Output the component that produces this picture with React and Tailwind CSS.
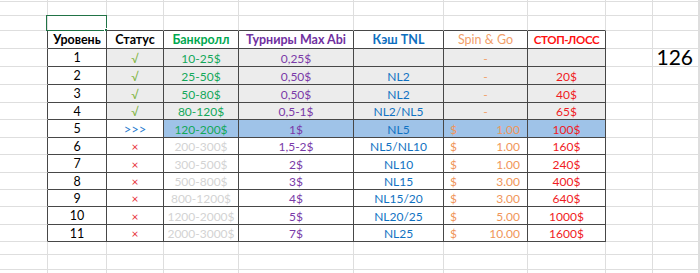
import React from "react";

const FONT = "font-['Lato','Noto_Sans',sans-serif]";

const DATA = [
  [1, "√", "10-25$", "0,25$", "", "-", ""],
  [2, "√", "25-50$", "0,50$", "NL2", "-", "20$"],
  [3, "√", "50-80$", "0,50$", "NL2", "-", "40$"],
  [4, "√", "80-120$", "0,5-1$", "NL2/NL5", "-", "65$"],
  [5, ">>>", "120-200$", "1$", "NL5", "1.00", "100$"],
  [6, "×", "200-300$", "1,5-2$", "NL5/NL10", "1.00", "160$"],
  [7, "×", "300-500$", "2$", "NL10", "1.00", "240$"],
  [8, "×", "500-800$", "3$", "NL15", "3.00", "400$"],
  [9, "×", "800-1200$", "4$", "NL15/20", "3.00", "640$"],
  [10, "×", "1200-2000$", "5$", "NL20/25", "5.00", "1000$"],
  [11, "×", "2000-3000$", "7$", "NL25", "10.00", "1600$"],
];

const HEADERS = [
  ["Уровень", "font-bold text-black text-[12.5px]"],
  ["Статус", "font-bold text-black text-[12.5px]"],
  ["Банкролл", "font-bold text-[#00a84f] text-[12.5px]"],
  ["Турниры Max Abi", "font-bold text-[#7030a0] text-[12.5px]"],
  ["Кэш TNL", "font-bold text-[#0f6fc0] text-[12.5px]"],
  ["Spin & Go", "font-normal text-[#f2a06a] text-[12.5px]"],
  ["СТОП-ЛОСС", "font-bold text-[#ff1010] text-[11.5px] tracking-[-0.4px]"],
];

const NROWS = 18;
const NCOLS = 11;

const inTable = (r, c) => r >= 3 && r <= 14 && c >= 1 && c <= 7;

function CellContent({ r, c }) {
  if (r === 4 && c === 9) {
    return (
      <div className="flex h-full w-full items-end justify-end pr-[5px] text-[21px] leading-none text-black">
        <span className="translate-y-[1px]">126</span>
      </div>
    );
  }
  if (!inTable(r, c)) return null;
  if (r === 3) {
    const [t, cls] = HEADERS[c - 1];
    return (
      <div className={`flex h-full w-full items-center justify-center whitespace-nowrap pt-[1px] ${cls}`}>
        {t}
      </div>
    );
  }
  const i = r - 4;
  const row = DATA[i];
  const v = row[c - 1];
  const base = "flex h-full w-full items-center justify-center whitespace-nowrap pt-[2px]";
  if (c === 1) {
    return <div className={`${base} text-[12.5px] text-black`}>{v}</div>;
  }
  if (c === 2) {
    const cls =
      v === "√"
        ? "text-[#7fb541] text-[12px]"
        : v === ">>>"
        ? "text-[#2f7fd0] text-[13px]"
        : "text-[#e8323a] text-[12px]";
    return <div className={`${base} ${cls}`}>{v}</div>;
  }
  if (c === 3) {
    const cls = i <= 4 ? "text-[#13a85a]" : "text-[#d3d3d3]";
    return <div className={`${base} text-[12px] ${cls}`}>{v}</div>;
  }
  if (c === 4) {
    return <div className={`${base} text-[12px] text-[#7a3aa8]`}>{v}</div>;
  }
  if (c === 5) {
    return <div className={`${base} text-[12px] text-[#1172c2]`}>{v}</div>;
  }
  if (c === 6) {
    if (v === "-") {
      return <div className={`${base} text-[12px] text-[#f2a06a]`}>-</div>;
    }
    return (
      <div className="flex h-full w-full items-center justify-between pl-[6px] pr-[7px] pt-[2px] text-[12px] text-[#f0965a]">
        <span>$</span>
        <span>{v}</span>
      </div>
    );
  }
  if (c === 7) {
    return <div className={`${base} text-[12px] text-[#f01c24]`}>{v}</div>;
  }
  return null;
}

function bgFor(r, c) {
  if (r >= 4 && r <= 7 && c >= 2 && c <= 7) return "bg-[#ececec]";
  if (r === 8 && c >= 3 && c <= 7) return "bg-[#9fc3e8]";
  return "bg-white";
}

export default function App() {
  const cells = [];
  for (let r = 0; r < NROWS; r++) {
    for (let c = 0; c < NCOLS; c++) {
      const darkR = inTable(r, c) || inTable(r, c + 1);
      const darkB = inTable(r, c) || inTable(r + 1, c);
      const rCls = darkR ? "border-r-[#474747]" : "border-r-[#dedede]";
      const bCls = darkB ? "border-b-[#474747]" : "border-b-[#dedede]";
      const selected = r === 2 && c === 1;
      cells.push(
        <div
          key={`${r}-${c}`}
          className={`relative overflow-visible border-r border-b ${rCls} ${bCls} ${bgFor(r, c)}`}
        >
          <CellContent r={r} c={c} />
          {selected && (
            <div className="pointer-events-none absolute left-[-2px] top-[-1px] right-[-1px] bottom-[-1px] border border-[#217346]">
              <div className="absolute right-[-3px] bottom-[-3px] h-[5px] w-[5px] border border-white bg-[#217346]" />
            </div>
          )}
        </div>
      );
    }
  }
  return (
    <div className={`h-[273px] w-[700px] overflow-hidden bg-white ${FONT}`}>
      <div className="grid grid-cols-[48px_59px_57px_75px_115px_90px_84px_78px_47px_46px_1px] grid-rows-[2px_14px_15px_18px_18px_18px_18px_17px_18px_17px_18px_17px_17px_18px_17px_13px_15px_4px]">
        {cells}
      </div>
    </div>
  );
}
